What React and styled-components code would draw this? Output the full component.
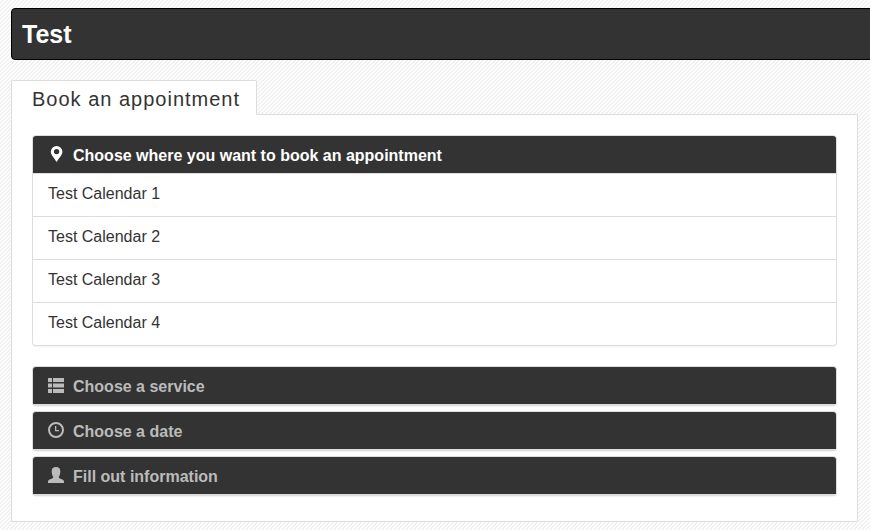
import styled, { createGlobalStyle } from "styled-components";

const GlobalStyle = createGlobalStyle`
  * {
    box-sizing: border-box;
  }

  body {
    margin: 0;
    min-height: 100vh;
    color: #333;
    font-family: "Liberation Sans", "Helvetica Neue", Helvetica, Arial, sans-serif;
    font-size: 16px;
    line-height: 22px;
    background-color: #fff;
    background-image: linear-gradient(135deg, #fff 25%, #f1f1f1 25%, #f1f1f1 50%, #fff 50%, #fff 75%, #f1f1f1 75%);
    background-size: 4px 4px;
    overflow-x: hidden;
  }
`;

const Page = styled.div`
  padding: 8px 12px 8px 11px;
`;

const Header = styled.header`
  height: 52px;
  margin-right: -24px;
  padding: 0 10px;
  display: flex;
  align-items: center;
  background-color: #333;
  border: 1px solid #000;
  border-radius: 4px;
`;

const Title = styled.h1`
  margin: 0;
  color: #fff;
  font-size: 25px;
  line-height: 28px;
`;

const Tabs = styled.nav`
  margin-top: 20px;
  display: flex;
`;

const Tab = styled.a`
  height: 35px;
  margin-bottom: -1px;
  padding: 6px 16px 6px 20px;
  z-index: 1;
  background-color: #fff;
  border: 1px solid #ddd;
  border-bottom-color: #fff;
  border-radius: 2px 2px 0 0;
  color: #333;
  font-size: 20px;
  line-height: 24px;
  letter-spacing: 1px;
  text-decoration: none;
`;

const Content = styled.main`
  padding: 20px 20px 25px;
  background-color: #fff;
  border: 1px solid #ddd;
`;

const Panel = styled.section`
  margin-bottom: ${(props) => (props.$open ? 20 : 5)}px;
  background-color: #ddd;
  border: 1px solid #ddd;
  border-bottom-width: ${(props) => (props.$open ? 1 : 2)}px;
  border-radius: 4px;
  box-shadow: 0 1px 1px rgba(0, 0, 0, 0.05);

  &:last-child {
    margin-bottom: 0;
  }
`;

const Heading = styled.h2`
  margin: 0;
  font-size: 16px;
`;

const Toggle = styled.button`
  width: 100%;
  padding: 9px 15px 6px;
  display: flex;
  align-items: center;
  gap: 9px;
  background-color: #333;
  border: 0;
  border-radius: 3px 3px 0 0;
  color: #fff;
  font: inherit;
  text-align: left;
  cursor: pointer;

  &:disabled {
    color: #bbb;
    cursor: default;
  }
`;

const Icon = styled.svg`
  width: 16px;
  height: 16px;
  margin-bottom: 4px;
  flex: none;
  fill: currentColor;
`;

const List = styled.ul`
  margin: 0;
  padding: 0;
  list-style: none;
  background-color: #fff;
  border-radius: 0 0 3px 3px;
`;

const Item = styled.li`
  border-top: 1px solid #ddd;
`;

const ItemLink = styled.a`
  display: block;
  padding: 9px 15px 11px;
  color: #333;
  text-decoration: none;
`;

function PinIcon() {
  return (
    <Icon viewBox="0 0 16 16" aria-hidden="true">
      <path
        fillRule="evenodd"
        d="M8.6 0A5.8 5.8 0 0 0 2.8 5.8C2.8 9 6.6 12.500 8.600 16c2-3.500 5.800-7 5.800-10.200A5.800 5.800 0 0 0 8.600 0zm0 2.900a2.700 2.700 0 1 1 0 5.400 2.700 2.700 0 0 1 0-5.400z"
      />
    </Icon>
  );
}

function ListIcon() {
  return (
    <Icon viewBox="0 0 16 16" aria-hidden="true">
      <path d="M0 1h4v4H0zM5 1h11v4H5zM0 6.500h4v4H0zM5 6.500h11v4H5zM0 12h4v4H0zM5 12h11v4H5z" />
    </Icon>
  );
}

function ClockIcon() {
  return (
    <Icon viewBox="0 0 16 16" aria-hidden="true">
      <path
        fillRule="evenodd"
        d="M8 0a8 8 0 1 1 0 16A8 8 0 0 1 8 0zm0 2a6 6 0 1 0 0 12A6 6 0 0 0 8 2zM7 4h1.300v4H11v1.300H7z"
      />
    </Icon>
  );
}

function UserIcon() {
  return (
    <Icon viewBox="0 0 16 16" aria-hidden="true">
      <path d="M8 0c2.700 0 4.300 1.500 4.300 4 0 2.400-.4 4.500-1.500 5.800 0 1 .3 1.300 1 1.600l2.600 1.100c1.200.5 1.600 1.200 1.600 2.300V16H0v-1.200c0-1.100.4-1.800 1.600-2.300l2.600-1.100c.7-.3 1-.6 1-1.600C4.100 8.500 3.700 6.400 3.700 4 3.700 1.500 5.300 0 8 0z" />
    </Icon>
  );
}

const calendars = ["Test Calendar 1", "Test Calendar 2", "Test Calendar 3", "Test Calendar 4"];

const steps = [
  { title: "Choose a service", icon: ListIcon },
  { title: "Choose a date", icon: ClockIcon },
  { title: "Fill out information", icon: UserIcon },
];

export default function App() {
  return (
    <>
      <GlobalStyle />
      <Page>
        <Header>
          <Title>Test</Title>
        </Header>
        <Tabs>
          <Tab href="#book">Book an appointment</Tab>
        </Tabs>
        <Content id="book">
          <Panel $open>
            <Heading>
              <Toggle type="button" aria-expanded="true">
                <PinIcon />
                Choose where you want to book an appointment
              </Toggle>
            </Heading>
            <List>
              {calendars.map((name) => (
                <Item key={name}>
                  <ItemLink href="#service">{name}</ItemLink>
                </Item>
              ))}
            </List>
          </Panel>
          {steps.map(({ title, icon: StepIcon }) => (
            <Panel key={title}>
              <Heading>
                <Toggle type="button" disabled>
                  <StepIcon />
                  {title}
                </Toggle>
              </Heading>
            </Panel>
          ))}
        </Content>
      </Page>
    </>
  );
}
